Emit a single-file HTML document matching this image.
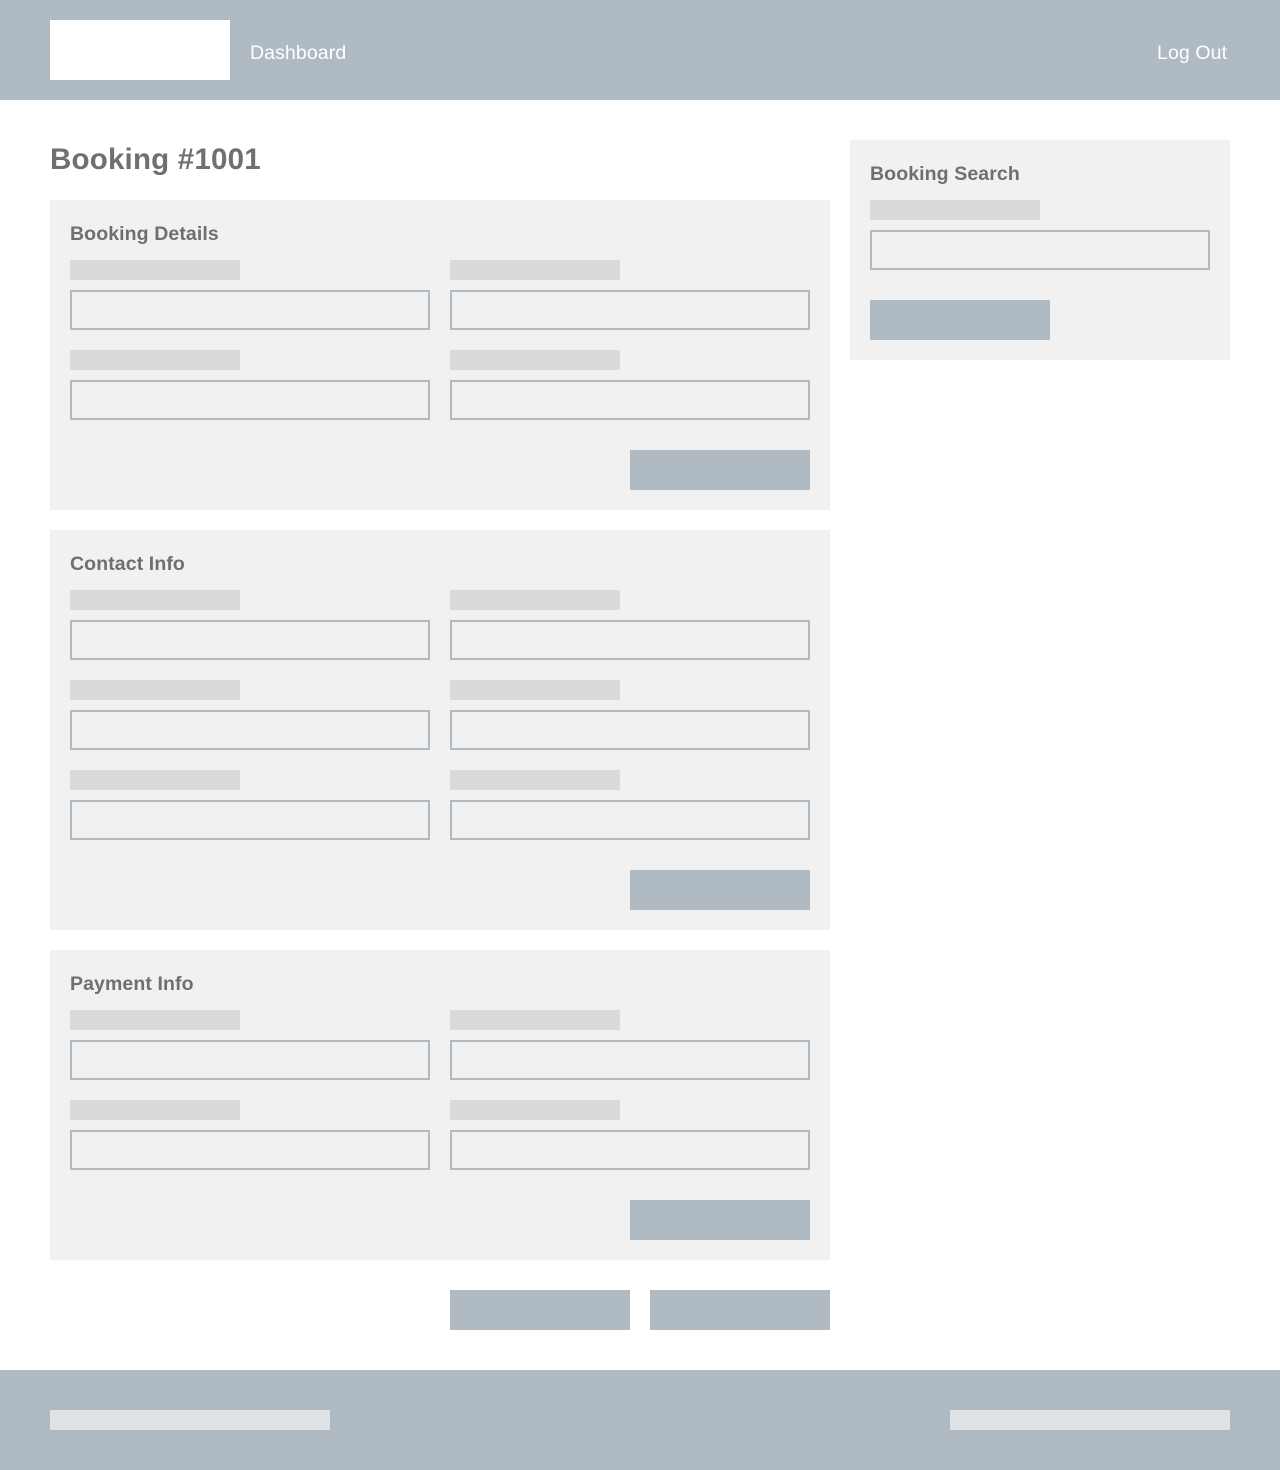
<!DOCTYPE html>
<html><head><style>
*{margin:0;padding:0;box-sizing:border-box}
body{width:1280px;height:1470px;position:relative;background:#fff;font-family:"Liberation Sans",Arial,sans-serif;overflow:hidden}
div{position:absolute}
.hd{left:0;top:0;width:1280px;height:100px;background:#b0bac2}
.nav{color:#fff;font-size:19.5px;top:41px;line-height:24px;letter-spacing:0.1px}
.panel{background:#f1f1f1}
.h{color:#6f6f6f;font-weight:bold;font-size:19.5px;line-height:24px;letter-spacing:0.1px}
.lb{width:170px;height:20px;background:#dadada}
.in{width:360px;height:40px;border:2px solid #b0bac2;background:#f1f1f1}
.bt{width:180px;height:40px;background:#b0bac2}
</style></head><body>
<div class="hd"></div>
<div style="left:50px;top:20px;width:180px;height:60px;background:#fff"></div>
<div class="nav" style="left:250px">Dashboard</div>
<div class="nav" style="left:1157px">Log Out</div>
<div style="left:50px;top:142px;font-size:29.5px;font-weight:bold;color:#707070;line-height:36px;letter-spacing:0.2px">Booking #1001</div>

<div class="panel" style="left:50px;top:200px;width:780px;height:310px"></div>
<div class="h" style="left:70px;top:222px">Booking Details</div>
<div class="lb" style="left:70px;top:260px"></div><div class="lb" style="left:450px;top:260px"></div>
<div class="in" style="left:70px;top:290px"></div><div class="in" style="left:450px;top:290px"></div>
<div class="lb" style="left:70px;top:350px"></div><div class="lb" style="left:450px;top:350px"></div>
<div class="in" style="left:70px;top:380px"></div><div class="in" style="left:450px;top:380px"></div>
<div class="bt" style="left:630px;top:450px"></div>

<div class="panel" style="left:50px;top:530px;width:780px;height:400px"></div>
<div class="h" style="left:70px;top:552px">Contact Info</div>
<div class="lb" style="left:70px;top:590px"></div><div class="lb" style="left:450px;top:590px"></div>
<div class="in" style="left:70px;top:620px"></div><div class="in" style="left:450px;top:620px"></div>
<div class="lb" style="left:70px;top:680px"></div><div class="lb" style="left:450px;top:680px"></div>
<div class="in" style="left:70px;top:710px"></div><div class="in" style="left:450px;top:710px"></div>
<div class="lb" style="left:70px;top:770px"></div><div class="lb" style="left:450px;top:770px"></div>
<div class="in" style="left:70px;top:800px"></div><div class="in" style="left:450px;top:800px"></div>
<div class="bt" style="left:630px;top:870px"></div>

<div class="panel" style="left:50px;top:950px;width:780px;height:310px"></div>
<div class="h" style="left:70px;top:972px">Payment Info</div>
<div class="lb" style="left:70px;top:1010px"></div><div class="lb" style="left:450px;top:1010px"></div>
<div class="in" style="left:70px;top:1040px"></div><div class="in" style="left:450px;top:1040px"></div>
<div class="lb" style="left:70px;top:1100px"></div><div class="lb" style="left:450px;top:1100px"></div>
<div class="in" style="left:70px;top:1130px"></div><div class="in" style="left:450px;top:1130px"></div>
<div class="bt" style="left:630px;top:1200px"></div>

<div class="bt" style="left:450px;top:1290px"></div>
<div class="bt" style="left:650px;top:1290px"></div>

<div class="panel" style="left:850px;top:140px;width:380px;height:220px"></div>
<div class="h" style="left:870px;top:162px">Booking Search</div>
<div class="lb" style="left:870px;top:200px"></div>
<div class="in" style="left:870px;top:230px;width:340px"></div>
<div class="bt" style="left:870px;top:300px"></div>

<div style="left:0;top:1370px;width:1280px;height:100px;background:#b0bac2"></div>
<div style="left:50px;top:1410px;width:280px;height:20px;background:#dfe3e5"></div>
<div style="left:950px;top:1410px;width:280px;height:20px;background:#dfe3e5"></div>
</body></html>
